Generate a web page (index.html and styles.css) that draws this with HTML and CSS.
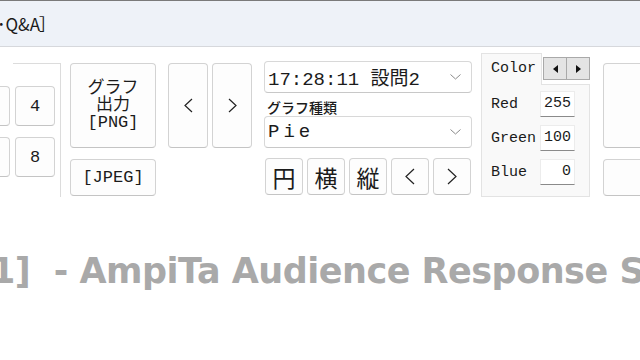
FILE: index.html
```html
<!DOCTYPE html>
<html lang="ja">
<head>
    <meta charset="UTF-8">
    <title>AmpiTa Audience Response System</title>
    <link rel="stylesheet" href="styles.css">
</head>
<body>
<div class="titlebar"><span class="title">･Q&amp;A<span class="bracket">］</span></span></div>

<div class="toolbar">
    <div class="grp">
        <div class="grp-line"></div>
        <div class="keys">
            <button class="btn key">3</button>
            <button class="btn key">4</button>
            <button class="btn key">7</button>
            <button class="btn key">8</button>
        </div>
    </div>

    <div class="export">
        <button class="btn png">グラフ<br>出力<br>[PNG]</button>
        <button class="btn jpeg">[JPEG]</button>
    </div>

    <div class="nav">
        <button class="btn nav-btn"><svg width="9" height="15" viewBox="0 0 9 15"><polyline points="8,1 1,7.5 8,14" fill="none" stroke="#222" stroke-width="1.2"/></svg></button>
        <button class="btn nav-btn"><svg width="9" height="15" viewBox="0 0 9 15"><polyline points="1,1 8,7.5 1,14" fill="none" stroke="#222" stroke-width="1.2"/></svg></button>
    </div>

    <div class="chart">
        <div class="combo">
            <span>17:28:11 設問2</span>
            <svg width="11" height="6" viewBox="0 0 11 6"><polyline points="0.5,0.5 5.5,5 10.5,0.5" fill="none" stroke="#8a8a8a" stroke-width="1"/></svg>
        </div>
        <div class="chart-label">グラフ種類</div>
        <div class="combo">
            <span class="spaced">Pie</span>
            <svg width="11" height="6" viewBox="0 0 11 6"><polyline points="0.5,0.5 5.5,5 10.5,0.5" fill="none" stroke="#8a8a8a" stroke-width="1"/></svg>
        </div>
        <div class="type-row">
            <button class="btn type">円</button>
            <button class="btn type">横</button>
            <button class="btn type">縦</button>
            <button class="btn type"><svg width="10" height="17" viewBox="0 0 10 17"><polyline points="9,1 1,8.5 9,16" fill="none" stroke="#222" stroke-width="1.2"/></svg></button>
            <button class="btn type"><svg width="10" height="17" viewBox="0 0 10 17"><polyline points="1,1 9,8.5 1,16" fill="none" stroke="#222" stroke-width="1.2"/></svg></button>
        </div>
    </div>

    <div class="color">
        <div class="color-head">
            <div class="tab">Color</div>
            <div class="head-rest">
                <div class="spin">
                    <span><svg width="5" height="8" viewBox="0 0 5 8"><polygon points="5,0 0,4 5,8" fill="#111"/></svg></span>
                    <span><svg width="5" height="8" viewBox="0 0 5 8"><polygon points="0,0 5,4 0,8" fill="#111"/></svg></span>
                </div>
            </div>
        </div>
        <div class="color-body">
            <div class="rgb-row"><span>Red</span><span class="field">255</span></div>
            <div class="rgb-row"><span>Green</span><span class="field">100</span></div>
            <div class="rgb-row"><span>Blue</span><span class="field">0</span></div>
        </div>
    </div>

    <div class="side">
        <button class="btn side-big"></button>
        <button class="btn side-small"></button>
    </div>
</div>

<div class="banner">1]&nbsp; - AmpiTa Audience Response System</div>
</body>
</html>
```

FILE: styles.css
```css
* {
    box-sizing: border-box;
}

body {
    margin: 0;
    width: 640px;
    height: 360px;
    overflow: hidden;
    background-color: #ffffff;
    color: #1b1b1b;
    font-family: "Liberation Mono", "Noto Sans CJK JP", monospace;
}

.titlebar {
    height: 47px;
    background-color: #eef2f8;
    border-top: 1px solid #7a7a7a;
    border-bottom: 1px solid #d6d8dc;
    white-space: nowrap;
}
.title {
    display: inline-block;
    margin-left: -3px;
    margin-top: 12px;
    font-family: "Noto Sans CJK JP", sans-serif;
    font-size: 17px;
    line-height: 22px;
    color: #1a1a1a;
}
.bracket {
    margin-left: -1px;
}

.toolbar {
    display: flex;
    align-items: flex-start;
    white-space: nowrap;
}
.toolbar > div {
    flex-shrink: 0;
}

.btn {
    display: flex;
    align-items: center;
    justify-content: center;
    padding: 0;
    margin: 0;
    background-color: #fdfdfd;
    border: 1px solid #d3d3d3;
    border-bottom-color: #c4c4c4;
    border-radius: 4px;
    color: #1b1b1b;
    font-family: "Liberation Mono", "Noto Sans CJK JP", monospace;
}

/* left group box, partly off screen */
.grp {
    margin-left: -60px;
    margin-top: 16px;
    width: 121px;
    height: 134px;
    border-right: 1px solid #dcdcdc;
}
.grp-line {
    margin-left: 73px;
    border-top: 1px solid #dcdcdc;
}
.keys {
    display: grid;
    grid-template-columns: 40px 40px;
    column-gap: 5px;
    row-gap: 11px;
    justify-content: end;
    padding-right: 5px;
    margin-top: 22px;
}
.key {
    height: 40px;
    font-size: 17px;
}

.export {
    display: flex;
    flex-direction: column;
    gap: 11px;
    margin-left: 9px;
    margin-top: 16px;
    width: 86px;
}
.png {
    height: 85px;
    font-size: 17px;
    line-height: 17px;
    text-align: center;
}
.jpeg {
    height: 37px;
    font-size: 17px;
}

.nav {
    display: flex;
    gap: 4px;
    margin-left: 12px;
    margin-top: 16px;
}
.nav-btn {
    width: 40px;
    height: 85px;
}

.chart {
    margin-left: 12px;
    margin-top: 14px;
    width: 208px;
}
.combo {
    display: flex;
    align-items: center;
    justify-content: space-between;
    height: 32px;
    padding: 0 10px 0 3px;
    background-color: #ffffff;
    border: 1px solid #d8d8d8;
    border-bottom-color: #c8c8c8;
    border-radius: 4px;
    font-size: 19px;
}
.spaced {
    letter-spacing: 4px;
}
.chart-label {
    height: 18px;
    margin-top: 5px;
    padding-left: 3px;
    font-family: "Noto Sans CJK JP", sans-serif;
    font-size: 14px;
    font-weight: 500;
    line-height: 18px;
}
.type-row {
    display: flex;
    gap: 4px;
    margin-top: 10px;
    padding-left: 1px;
}
.type {
    width: 38px;
    height: 37px;
    font-family: "Noto Sans CJK JP", sans-serif;
    font-size: 23px;
}

.color {
    margin-left: 9px;
    margin-top: 6px;
    width: 109px;
}
.color-head {
    display: flex;
    height: 32px;
}
.tab {
    width: 61px;
    padding: 6px 0 0 9px;
    background-color: #f9f9f9;
    border: 1px solid #e3e3e3;
    border-bottom: none;
    font-size: 15px;
}
.head-rest {
    flex: 1;
    border-bottom: 1px solid #e3e3e3;
}
.spin {
    display: flex;
    margin-top: 4px;
    margin-left: 1px;
    height: 23px;
    border: 1px solid #a9a9a9;
    background-color: #e4e4e4;
}
.spin span {
    flex: 1;
    display: flex;
    align-items: center;
    justify-content: center;
}
.spin span + span {
    border-left: 1px solid #a9a9a9;
}
.color-body {
    height: 112px;
    padding: 6px 14px 0 9px;
    background-color: #f9f9f9;
    border: 1px solid #e3e3e3;
    border-top: none;
}
.rgb-row {
    display: flex;
    align-items: center;
    justify-content: space-between;
    height: 26px;
    margin-bottom: 8px;
    font-size: 15px;
}
.field {
    width: 35px;
    height: 26px;
    padding: 3px 3px 0 0;
    text-align: right;
    background-color: #ffffff;
    border: 1px solid #ececec;
    border-bottom: 1px solid #8a8a8a;
}

.side {
    display: flex;
    flex-direction: column;
    gap: 11px;
    margin-left: 13px;
    margin-top: 16px;
    width: 80px;
}
.side-big {
    height: 85px;
}
.side-small {
    height: 37px;
}

.banner {
    margin-top: 52px;
    margin-left: -9px;
    white-space: nowrap;
    font-family: "DejaVu Sans", sans-serif;
    font-size: 35px;
    font-weight: bold;
    letter-spacing: -0.5px;
    line-height: 44px;
    color: #a9a9a9;
}
```
